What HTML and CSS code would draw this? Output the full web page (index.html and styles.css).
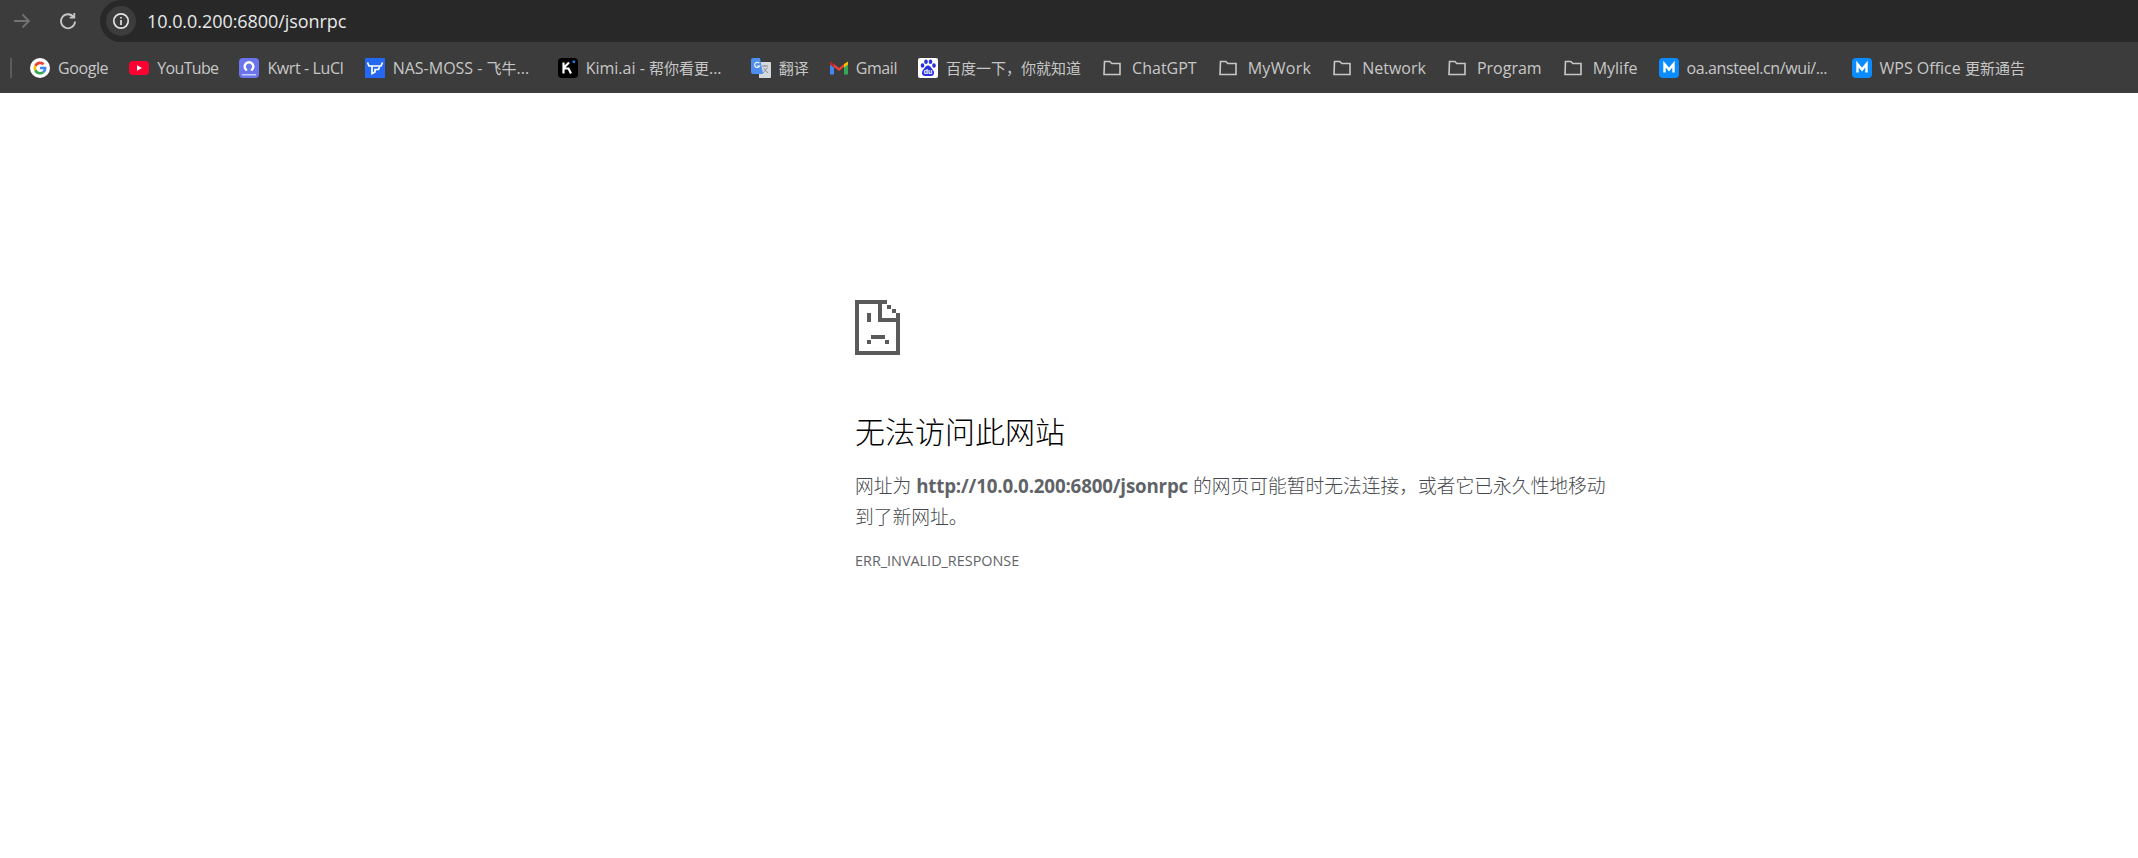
FILE: index.html
```html
<!DOCTYPE html>
<html lang="zh-CN">
<head>
  <meta charset="UTF-8">
  <title>10.0.0.200</title>
  <link rel="stylesheet" href="styles.css">
</head>
<body>
  <!-- 地址栏 -->
  <header class="toolbar">
    <svg class="nav-icon forward" viewBox="0 0 20 20"><path d="M2 10H17M10.5 3.5L17 10L10.5 16.5"/></svg>
    <svg class="nav-icon reload" viewBox="0 0 20 20"><path d="M15.7 6.2A7 7 0 1 0 17 10.5M16.3 2V6.6H11.7"/></svg>
    <div class="omnibox">
      <span class="site-info">
        <svg viewBox="0 0 18 18"><circle cx="9" cy="9" r="7.2"/><path d="M9 8V13M9 5V6.6"/></svg>
      </span>
      <span class="url">10.0.0.200:6800/jsonrpc</span>
    </div>
  </header>

  <!-- 书签栏 -->
  <nav class="bookmarks">
    <span class="apps-sep"></span>
    <a class="bookmark">
      <svg class="favicon" viewBox="0 0 20 20">
        <circle cx="10" cy="10" r="10" fill="#fff"/>
        <path d="M10 6.2a3.8 3.8 0 0 1 2.6 1l1.9-1.9A6.5 6.5 0 0 0 4.2 7.1l2.2 1.7A3.9 3.9 0 0 1 10 6.2z" fill="#ea4335"/>
        <path d="M6.200 10c0-.4.1-.8.2-1.200L4.200 7.100a6.500 6.500 0 0 0 0 5.800l2.200-1.700c-.1-.4-.2-.8-.2-1.200z" fill="#fbbc05"/>
        <path d="M10 16.500a6.300 6.300 0 0 0 4.300-1.600l-2.100-1.600a3.900 3.900 0 0 1-5.800-2.100l-2.200 1.700A6.500 6.500 0 0 0 10 16.500z" fill="#34a853"/>
        <path d="M16.300 8.700H10v2.600h3.600a3 3 0 0 1-1.400 2l2.100 1.600c1.300-1.200 2.200-3 2.200-5 0-.4-.1-.8-.2-1.200z" fill="#4285f4"/>
      </svg>
      <span class="tight">Google</span>
    </a>
    <a class="bookmark">
      <svg class="favicon" viewBox="0 0 20 20">
        <rect y="3" width="20" height="14" rx="4" fill="#ff0033"/>
        <path d="M8 7.200L13 10L8 12.800z" fill="#fff"/>
      </svg>
      <span class="tighter">YouTube</span>
    </a>
    <a class="bookmark">
      <svg class="favicon" viewBox="0 0 20 20">
        <rect width="20" height="20" rx="4" fill="#6b76ee"/>
        <path d="M7.200 11.800a4.300 4.300 0 1 1 5.600 0" fill="none" stroke="#fff" stroke-width="2.400" stroke-linecap="round"/>
        <rect x="3" y="16" width="14" height="1.500" fill="#c9cdfa"/>
      </svg>
      <span class="tight">Kwrt - LuCI</span>
    </a>
    <a class="bookmark elided">
      <svg class="favicon" viewBox="0 0 20 20">
        <rect width="20" height="20" fill="#2468f2"/>
        <path d="M2.500 4.500L4 8H16L17.500 4.500M7 8.500V15.500L10 14V11.500H13.500L14.500 9" fill="none" stroke="#fff" stroke-width="1.700"/>
      </svg>
      <span>NAS-MOSS - <span class="cjk">飞牛</span>...</span>
    </a>
    <a class="bookmark elided">
      <svg class="favicon" viewBox="0 0 20 20">
        <rect width="20" height="20" rx="4" fill="#000"/>
        <path d="M5.500 4.500V15.500M5.500 10.500H10.500L13 15.500M5.500 10L11 4.500" fill="none" stroke="#fff" stroke-width="2.200"/>
        <circle cx="15.800" cy="3.800" r="1.400" fill="#1783ff"/>
      </svg>
      <span>Kimi.ai - <span class="cjk">帮你看更</span>...</span>
    </a>
    <a class="bookmark">
      <svg class="favicon" viewBox="0 0 20 20">
        <path d="M8 4H19a1 1 0 0 1 1 1V19a1 1 0 0 1-1 1H8z" fill="#d5d8dc"/>
        <path d="M11 8H17M14 7V9M12 15L16.500 9.500M12.500 10L17 15" fill="none" stroke="#8a8f96" stroke-width="1"/>
        <path d="M2 0H9L12 16H2a2 2 0 0 1-2-2V2a2 2 0 0 1 2-2z" fill="#4e8ef0"/>
        <path d="M8.300 5.200A2.600 2.600 0 1 0 8.600 8H6.200" fill="none" stroke="#fff" stroke-width="1.100"/>
      </svg>
      <span class="cjk">翻译</span>
    </a>
    <a class="bookmark">
      <svg class="favicon gmail" viewBox="0 0 18 20">
        <path d="M0 6V16.500H4V8z" fill="#4285f4"/>
        <path d="M14 8V16.500H18V6z" fill="#34a853"/>
        <path d="M0 3.500V6.500L4 9.500V6z" fill="#c5221f"/>
        <path d="M4 6L9 10L14 6V9L9 13L4 9z" fill="#ea4335"/>
        <path d="M14 6V9.500L18 6.500V3.500z" fill="#fbbc04"/>
      </svg>
      <span class="tight">Gmail</span>
    </a>
    <a class="bookmark">
      <svg class="favicon" viewBox="0 0 20 20">
        <rect width="20" height="20" rx="2" fill="#fff"/>
        <g fill="#2932e1">
          <ellipse cx="4.500" cy="7.500" rx="1.800" ry="2.200"/>
          <ellipse cx="8" cy="3.800" rx="1.800" ry="2.300"/>
          <ellipse cx="12.500" cy="3.800" rx="1.800" ry="2.300"/>
          <ellipse cx="16" cy="7.500" rx="1.800" ry="2.200"/>
          <path d="M10 7.500C7.500 7.500 7 10 5 12C3 14.500 4 18 7 18H13C16 18 17 14.500 15 12C13 10 12.500 7.500 10 7.500z"/>
        </g>
        <text class="baidu-du" x="10" y="16.300" text-anchor="middle">du</text>
      </svg>
      <span class="cjk">百度一下，你就知道</span>
    </a>
    <a class="bookmark"><svg class="favicon folder" viewBox="0 0 20 20"><path d="M2.500 3.500H7.800L9.800 5.500H18V16.500H2z"/></svg><span>ChatGPT</span></a>
    <a class="bookmark"><svg class="favicon folder" viewBox="0 0 20 20"><path d="M2.500 3.500H7.800L9.800 5.500H18V16.500H2z"/></svg><span class="loose">MyWork</span></a>
    <a class="bookmark"><svg class="favicon folder" viewBox="0 0 20 20"><path d="M2.500 3.500H7.800L9.800 5.500H18V16.500H2z"/></svg><span>Network</span></a>
    <a class="bookmark"><svg class="favicon folder" viewBox="0 0 20 20"><path d="M2.500 3.500H7.800L9.800 5.500H18V16.500H2z"/></svg><span>Program</span></a>
    <a class="bookmark"><svg class="favicon folder" viewBox="0 0 20 20"><path d="M2.500 3.500H7.800L9.800 5.500H18V16.500H2z"/></svg><span>Mylife</span></a>
    <a class="bookmark elided">
      <svg class="favicon" viewBox="0 0 20 20"><rect width="20" height="20" rx="4" fill="#0a8cff"/><path d="M5.500 14.500V6L10 11.500L14.500 6V14.500" fill="none" stroke="#fff" stroke-width="2.400"/></svg>
      <span class="tight">oa.ansteel.cn/wui/...</span>
    </a>
    <a class="bookmark">
      <svg class="favicon" viewBox="0 0 20 20"><rect width="20" height="20" rx="4" fill="#0a8cff"/><path d="M5.500 14.500V6L10 11.500L14.500 6V14.500" fill="none" stroke="#fff" stroke-width="2.400"/></svg>
      <span>WPS Office <span class="cjk">更新通告</span></span>
    </a>
  </nav>

  <!-- 错误页内容 -->
  <main class="error-page">
    <svg class="sad-file" viewBox="0 0 45 55">
      <path d="M0 0H32V4H4V51H41V22H23V0H27V18H45V55H0z"/>
      <path d="M32 5H36V9H32zM37 9H41V13H37zM41 13H45V18H41z"/>
      <path d="M12 13H16V22H12z"/>
      <path d="M16 35H30V39H16zM12 40H16V44H12zM30 40H34V44H30z"/>
    </svg>
    <h1>无法访问此网站</h1>
    <p class="summary">网址为 <strong>http://10.0.0.200:6800/jsonrpc</strong> 的网页可能暂时无法连接，或者它已永久性地移动到了新网址。</p>
    <div class="error-code">ERR_INVALID_RESPONSE</div>
  </main>
</body>
</html>
```

FILE: styles.css
```css
html, body {
  margin: 0;
  padding: 0;
  height: 100%;
  background-color: #fff;
  overflow: hidden;
}
body {
  font-family: "Open Sans", "Noto Sans CJK SC", sans-serif;
}

/* toolbar */
.toolbar {
  display: flex;
  align-items: center;
  height: 42px;
  background-color: #3c3c3c;
}
.nav-icon {
  width: 20px;
  height: 20px;
  fill: none;
  stroke-width: 1.8;
}
.forward {
  margin-left: 12px;
  stroke: #727272;
}
.reload {
  margin-left: 26px;
  margin-right: 22px;
  stroke: #c7c7c7;
}
.omnibox {
  flex: 1;
  display: flex;
  align-items: center;
  height: 42px;
  padding-left: 6px;
  background-color: #282828;
  border-radius: 21px 0 0 21px;
}
.site-info {
  display: flex;
  align-items: center;
  justify-content: center;
  width: 30px;
  height: 30px;
  border-radius: 50%;
  background-color: #3c3c3c;
}
.site-info svg {
  width: 18px;
  height: 18px;
  fill: none;
  stroke: #e3e3e3;
  stroke-width: 1.7;
}
.url {
  margin-left: 11px;
  font-family: "Open Sans", sans-serif;
  font-size: 18px;
  letter-spacing: -0.06px;
  color: #e8e8e8;
}

/* bookmarks */
.bookmarks {
  display: flex;
  align-items: center;
  height: 51px;
  background-color: #3c3c3c;
  font-size: 16px;
  color: #c7c7c7;
}
.apps-sep {
  width: 2px;
  height: 20px;
  margin: 0 7.5px 0 10px;
  background-color: #5c5c5c;
}
.bookmark {
  display: flex;
  align-items: center;
  gap: 8px;
  padding: 0 10.5px;
  white-space: nowrap;
}
.bookmark.elided {
  box-sizing: border-box;
  width: 193px;
}
.cjk {
  font-size: 15px;
}
.tight {
  letter-spacing: -0.4px;
}
.tighter {
  letter-spacing: -0.65px;
}
.loose {
  letter-spacing: 0.3px;
}
.favicon {
  flex: none;
  width: 20px;
  height: 20px;
}
.favicon.gmail {
  width: 18px;
}
.favicon.folder {
  margin-right: 2px;
}
.folder path {
  fill: none;
  stroke: #c7c7c7;
  stroke-width: 1.6;
}
.baidu-du {
  font-family: "Liberation Sans", sans-serif;
  font-size: 7px;
  font-weight: bold;
  fill: #fff;
}

/* error page */
.error-page {
  width: 756px;
  margin-left: 855px;
  padding-top: 207px;
  color: #5f6368;
  font-size: 18.75px;
}
.sad-file {
  display: block;
  width: 45px;
  height: 55px;
  fill: #5a5a5a;
}
h1 {
  margin: 57px 0 0;
  font-size: 30px;
  line-height: 40px;
  font-weight: 300;
  color: #000;
}
.summary {
  margin: 18px 0 0;
  line-height: 31px;
  font-weight: 300;
  color: #45484c;
}
.summary strong {
  font-weight: 700;
  letter-spacing: -0.18px;
  color: #5f6368;
}
.error-code {
  margin-top: 19px;
  font-size: 14.4px;
  line-height: 20px;
}
```
